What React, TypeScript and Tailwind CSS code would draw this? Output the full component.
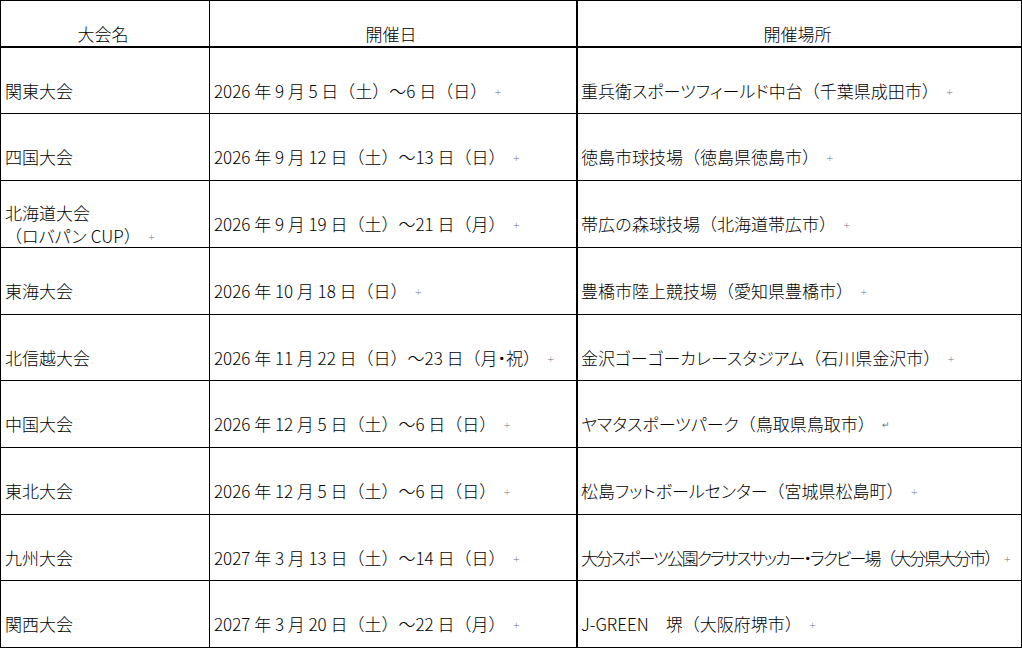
const rows = [
  { h: "h-[66px]", name: ["関東大会"], date: "2026 年 9 月 5 日（土）～6 日（日）", place: "重兵衛スポーツフィールド中台（千葉県成田市）" },
  { h: "h-[67px]", name: ["四国大会"], date: "2026 年 9 月 12 日（土）～13 日（日）", place: "徳島市球技場（徳島県徳島市）" },
  { h: "h-[67px]", name: ["北海道大会", "（ロバパン\u2005CUP）"], date: "2026 年 9 月 19 日（土）～21 日（月）", place: "帯広の森球技場（北海道帯広市）" },
  { h: "h-[67px]", name: ["東海大会"], date: "2026 年 10 月 18 日（日）", place: "豊橋市陸上競技場（愛知県豊橋市）" },
  { h: "h-[66px]", name: ["北信越大会"], date: "2026 年 11 月 22 日（日）～23 日（月・祝）", place: "金沢ゴーゴーカレースタジアム（石川県金沢市）" },
  { h: "h-[67px]", name: ["中国大会"], date: "2026 年 12 月 5 日（土）～6 日（日）", place: "ヤマタスポーツパーク（鳥取県鳥取市）", arrow: true },
  { h: "h-[67px]", name: ["東北大会"], date: "2026 年 12 月 5 日（土）～6 日（日）", place: "松島フットボールセンター（宮城県松島町）" },
  { h: "h-[66px]", name: ["九州大会"], date: "2027 年 3 月 13 日（土）～14 日（日）", place: "大分スポーツ公園クラサスサッカー・ラクビー場（大分県大分市）", tight: true },
  { h: "h-[67px]", name: ["関西大会"], date: "2027 年 3 月 20 日（土）～22 日（月）", place: "J-GREEN　堺（大阪府堺市）" },
]

// katakana runs get proportional widths, like the Word font in the screenshot
const Jp = ({ text }: { text: string }) => (
  <>
    {text.split(/([ァ-ヶー・]+)/).map((part, i) =>
      /^[ァ-ヶー・]+$/.test(part) ? (
        <span key={i} className="[font-feature-settings:'palt']">
          {part}
        </span>
      ) : (
        <span key={i}>{part}</span>
      )
    )}
  </>
)

// tiny grey dot left by Word after cell text
const Dot = () => (
  <span className="ml-[1px] text-[9px] leading-none text-gray-500 translate-y-[3px] tracking-normal font-['DejaVu_Sans',sans-serif]">.</span>
)

// end-of-cell marker
const Mark = ({ arrow = false, tight = false }: { arrow?: boolean; tight?: boolean }) => (
  <span
    className={`${tight ? "ml-[4px]" : "ml-[7px]"} text-[9px] leading-none text-gray-500 translate-y-[2px] tracking-normal font-['DejaVu_Sans',sans-serif]`}
  >
    {arrow ? "↵" : "+"}
  </span>
)

export default function App() {
  return (
    <div className="w-[1022px] h-[648px] overflow-hidden bg-white text-black text-[17px] leading-[23px] font-light font-['Noto_Sans_CJK_JP',sans-serif]">
      {/* header */}
      <div className="flex h-[48px] border-t border-black border-b-2">
        <div className="w-[210px] shrink-0 border-l border-r border-black flex items-center justify-center pt-[19px]">
          <span>大会名</span>
          <Dot />
        </div>
        <div className="w-[368px] shrink-0 border-r-2 border-black flex items-center justify-center pt-[19px]">
          <span>開催日</span>
          <Dot />
        </div>
        <div className="flex-1 min-w-0 border-r border-black flex items-center justify-center pt-[19px]">
          <span>開催場所</span>
          <Dot />
        </div>
      </div>

      {rows.map((r, i) => (
        <div key={i} className={`flex ${r.h} border-b border-black`}>
          <div className="w-[210px] shrink-0 border-l border-r border-black flex flex-col justify-center pl-[4px] pt-[19px]">
            {r.name.map((line, j) => (
              <div key={j} className="flex items-center whitespace-pre">
                <Jp text={line} />
                {j === r.name.length - 1 && r.name.length > 1 ? <Mark /> : <Dot />}
              </div>
            ))}
          </div>
          <div className="w-[368px] shrink-0 border-r-2 border-black flex items-center pl-[4px] pt-[19px] whitespace-pre">
            <Jp text={r.date} />
            <Mark />
          </div>
          <div
            className={`flex-1 min-w-0 border-r border-black flex items-center pl-[3px] pt-[19px] whitespace-pre ${
              r.tight ? "tracking-[-2px]" : ""
            }`}
          >
            <Jp text={r.place} />
            <Mark arrow={r.arrow} tight={r.tight} />
          </div>
        </div>
      ))}
    </div>
  )
}
